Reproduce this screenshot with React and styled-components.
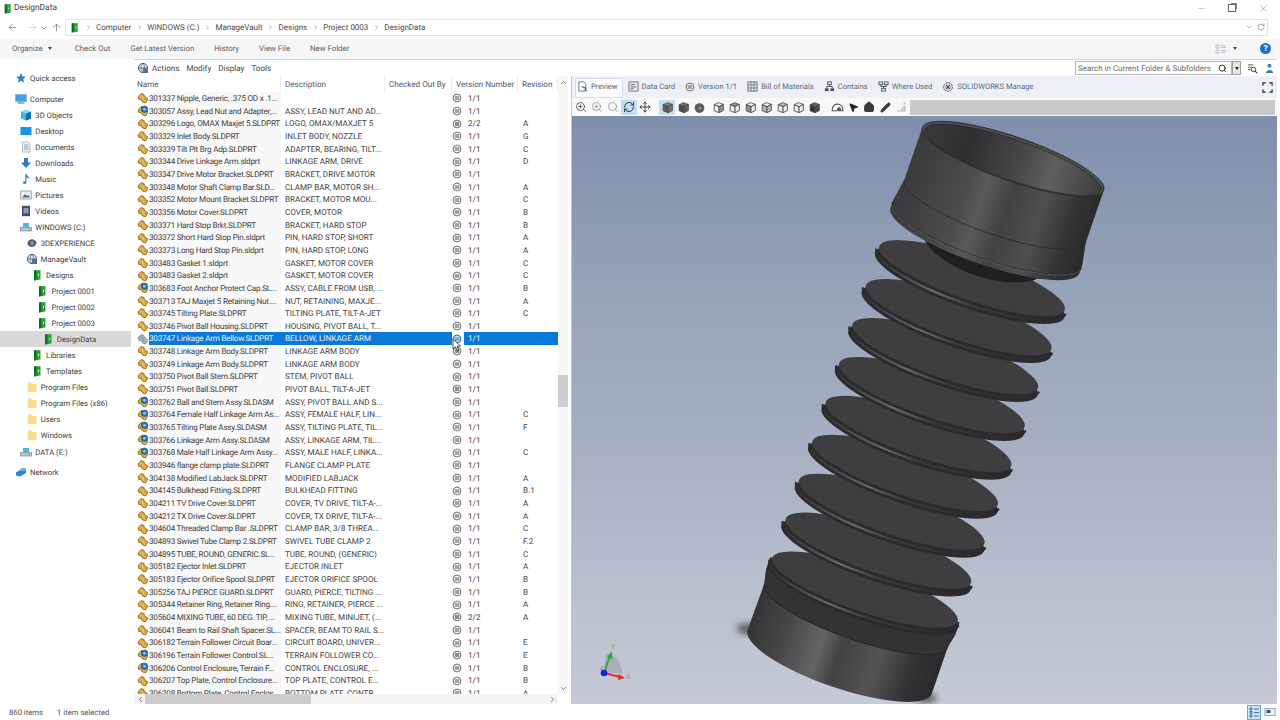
import React from 'react';
import styled, { createGlobalStyle } from 'styled-components';
import { ArrowLeft, ArrowRight, ArrowUp, ChevronDown, ChevronRight, ChevronUp, ChevronLeft, RotateCw, Minus, X, Search, Move, MousePointer2, House, Pencil, RefreshCw, ZoomIn } from 'lucide-react';

const FILES = [
	['301337 Nipple, Generic, .375 OD x .1...', '', '1/1', ''],
	['303057 Assy, Lead Nut and Adapter,...', 'ASSY, LEAD NUT AND AD...', '1/1', '', 'asm'],
	['303296 Logo, OMAX Maxjet 5.SLDPRT', 'LOGO, OMAX/MAXJET 5', '2/2', 'A', 'lock'],
	['303329 Inlet Body.SLDPRT', 'INLET BODY, NOZZLE', '1/1', 'G'],
	['303339 Tilt Plt Brg Adp.SLDPRT', 'ADAPTER, BEARING, TILT...', '1/1', 'C'],
	['303344 Drive Linkage Arm.sldprt', 'LINKAGE ARM, DRIVE', '1/1', 'D'],
	['303347 Drive Motor Bracket.SLDPRT', 'BRACKET, DRIVE MOTOR', '1/1', ''],
	['303348 Motor Shaft Clamp Bar.SLD...', 'CLAMP BAR, MOTOR SH...', '1/1', 'A'],
	['303352 Motor Mount Bracket.SLDPRT', 'BRACKET, MOTOR MOU...', '1/1', 'C'],
	['303356 Motor Cover.SLDPRT', 'COVER, MOTOR', '1/1', 'B'],
	['303371 Hard Stop Brkt.SLDPRT', 'BRACKET, HARD STOP', '1/1', 'B'],
	['303372 Short Hard Stop Pin.sldprt', 'PIN, HARD STOP, SHORT', '1/1', 'A'],
	['303373 Long Hard Stop Pin.sldprt', 'PIN, HARD STOP, LONG', '1/1', 'A'],
	['303483 Gasket 1.sldprt', 'GASKET, MOTOR COVER', '1/1', 'C'],
	['303483 Gasket 2.sldprt', 'GASKET, MOTOR COVER', '1/1', 'C'],
	['303683 Foot Anchor Protect Cap.SL...', 'ASSY, CABLE FROM USB, ...', '1/1', 'B', 'asm'],
	['303713 TAJ Maxjet 5 Retaining Nut....', 'NUT, RETAINING, MAXJE...', '1/1', 'A'],
	['303745 Tilting Plate.SLDPRT', 'TILTING PLATE, TILT-A-JET', '1/1', 'C'],
	['303746 Pivot Ball Housing.SLDPRT', 'HOUSING, PIVOT BALL, T...', '1/1', ''],
	['303747 Linkage Arm Bellow.SLDPRT', 'BELLOW, LINKAGE ARM', '1/1', '', 'sel'],
	['303748 Linkage Arm Body.SLDPRT', 'LINKAGE ARM BODY', '1/1', '', 'lock'],
	['303749 Linkage Arm Body.SLDPRT', 'LINKAGE ARM BODY', '1/1', ''],
	['303750 Pivot Ball Stem.SLDPRT', 'STEM, PIVOT BALL', '1/1', ''],
	['303751 Pivot Ball.SLDPRT', 'PIVOT BALL, TILT-A-JET', '1/1', '', 'lock'],
	['303762 Ball and Stem Assy.SLDASM', 'ASSY, PIVOT BALL AND S...', '1/1', '', 'asm'],
	['303764 Female Half Linkage Arm As...', 'ASSY, FEMALE HALF, LIN...', '1/1', 'C', 'asm'],
	['303765 Tilting Plate Assy.SLDASM', 'ASSY, TILTING PLATE, TIL...', '1/1', 'F', 'asm'],
	['303766 Linkage Arm Assy.SLDASM', 'ASSY, LINKAGE ARM, TIL...', '1/1', '', 'asm'],
	['303768 Male Half Linkage Arm Assy...', 'ASSY, MALE HALF, LINKA...', '1/1', 'C', 'asm'],
	['303946 flange clamp plate.SLDPRT', 'FLANGE CLAMP PLATE', '1/1', ''],
	['304138 Modified LabJack.SLDPRT', 'MODIFIED LABJACK', '1/1', 'A'],
	['304145 Bulkhead Fitting.SLDPRT', 'BULKHEAD FITTING', '1/1', 'B.1'],
	['304211 TV Drive Cover.SLDPRT', 'COVER, TV DRIVE, TILT-A-...', '1/1', 'A'],
	['304212 TX Drive Cover.SLDPRT', 'COVER, TX DRIVE, TILT-A-...', '1/1', 'A'],
	['304604 Threaded Clamp Bar .SLDPRT', 'CLAMP BAR, 3/8 THREA...', '1/1', 'C'],
	['304893 Swivel Tube Clamp 2.SLDPRT', 'SWIVEL TUBE CLAMP 2', '1/1', 'F.2'],
	['304895 TUBE, ROUND, GENERIC.SL...', 'TUBE, ROUND, (GENERIC)', '1/1', 'C'],
	['305182 Ejector Inlet.SLDPRT', 'EJECTOR INLET', '1/1', 'A'],
	['305183 Ejector Orifice Spool.SLDPRT', 'EJECTOR ORIFICE SPOOL', '1/1', 'B'],
	['305256 TAJ PIERCE GUARD.SLDPRT', 'GUARD, PIERCE, TILTING ...', '1/1', 'B'],
	['305344 Retainer Ring, Retainer Ring....', 'RING, RETAINER, PIERCE ...', '1/1', 'A'],
	['305604 MIXING TUBE, 60 DEG. TIP, ...', 'MIXING TUBE, MINIJET, (...', '2/2', 'A', 'lock'],
	['306041 Beam to Rail Shaft Spacer.SL...', 'SPACER, BEAM TO RAIL S...', '1/1', ''],
	['306182 Terrain Follower Circuit Boar...', 'CIRCUIT BOARD, UNIVER...', '1/1', 'E'],
	['306196 Terrain Follower Control.SL...', 'TERRAIN FOLLOWER CO...', '1/1', 'E', 'asmlock'],
	['306206 Control Enclosure, Terrain F...', 'CONTROL ENCLOSURE, ...', '1/1', 'B', 'asm'],
	['306207 Top Plate, Control Enclosure...', 'TOP PLATE, CONTROL E...', '1/1', 'B'],
	['306208 Bottom Plate, Control Enclos...', 'BOTTOM PLATE, CONTR...', '1/1', 'A'],
];

const TREE = [
	{ label: 'Quick access', icon: 'star', depth: 0, after: 5 },
	{ label: 'Computer', icon: 'monitor', depth: 0 },
	{ label: '3D Objects', icon: 'cube', depth: 1 },
	{ label: 'Desktop', icon: 'desktop', depth: 1 },
	{ label: 'Documents', icon: 'doc', depth: 1 },
	{ label: 'Downloads', icon: 'download', depth: 1 },
	{ label: 'Music', icon: 'music', depth: 1 },
	{ label: 'Pictures', icon: 'picture', depth: 1 },
	{ label: 'Videos', icon: 'video', depth: 1 },
	{ label: 'WINDOWS (C:)', icon: 'drive', depth: 1 },
	{ label: '3DEXPERIENCE', icon: 'gear', depth: 2 },
	{ label: 'ManageVault', icon: 'globe', depth: 2 },
	{ label: 'Designs', icon: 'vault', depth: 3 },
	{ label: 'Project 0001', icon: 'vault', depth: 4 },
	{ label: 'Project 0002', icon: 'vault', depth: 4 },
	{ label: 'Project 0003', icon: 'vault', depth: 4 },
	{ label: 'DesignData', icon: 'vault', depth: 5, active: true },
	{ label: 'Libraries', icon: 'vault', depth: 3 },
	{ label: 'Templates', icon: 'vault', depth: 3 },
	{ label: 'Program Files', icon: 'folder', depth: 2 },
	{ label: 'Program Files (x86)', icon: 'folder', depth: 2 },
	{ label: 'Users', icon: 'folder', depth: 2 },
	{ label: 'Windows', icon: 'folder', depth: 2, after: 1 },
	{ label: 'DATA (E:)', icon: 'drive', depth: 1, after: 4 },
	{ label: 'Network', icon: 'network', depth: 0 },
];

const CRUMBS = ['Computer', 'WINDOWS (C:)', 'ManageVault', 'Designs', 'Project 0003', 'DesignData'];
const COMMANDS = ['Check Out', 'Get Latest Version', 'History', 'View File', 'New Folder'];
const TABS = [
	['Preview', 'page'],
	['Data Card', 'card'],
	['Version 1/1', 'state'],
	['Bill of Materials', 'table'],
	['Contains', 'tree'],
	['Where Used', 'treeUp'],
	['SOLIDWORKS Manage', 'gear'],
];

const GlobalStyle = createGlobalStyle`
	html, body {
		margin: 0;
		padding: 0;
		background: #fff;
	}
	body {
		font-family: Roboto, 'Open Sans', sans-serif;
		font-size: 8.1px;
		color: #3d3d3d;
		text-rendering: geometricPrecision;
	}
`;

const Window = styled.div`
	width: 1280px;
	height: 720px;
	display: flex;
	flex-direction: column;
	overflow: hidden;
	background: #fff;
`;

const TitleBar = styled.div`
	height: 16px;
	flex: none;
	display: flex;
	align-items: center;
	padding-left: 2px;
	gap: 1px;
	font-size: 8.4px;
`;

const WindowButtons = styled.div`
	margin-left: auto;
	display: flex;
	color: #666;
	padding-right: 11px;
	gap: 22px;
	align-items: center;
`;

const RestoreBox = styled.span`
	width: 6px;
	height: 6px;
	border: 1px solid #666;
	box-shadow: 2px -2px 0 -1px #888;
`;

const AddressRow = styled.div`
	height: 23px;
	flex: none;
	display: flex;
	align-items: center;
	padding-left: 7px;
	color: #555;
`;

const NavButton = styled.span`
	width: ${(p) => p.$w}px;
	display: flex;
	color: ${(p) => (p.$dim ? '#c4c4c4' : '#5c5c5c')};
`;

const AddressBox = styled.div`
	flex: 1;
	height: 14px;
	margin-right: 12px;
	border: 1px solid #e3e3e3;
	display: flex;
	align-items: center;
	padding: 0 0 1px 3px;
	box-sizing: content-box;
	font-size: 8px;
	color: #4a4a4a;
`;

const Crumb = styled.span`
	display: flex;
	align-items: center;
	margin: 0 4.5px;
	color: #777;
`;

const CrumbText = styled.span`
	color: #4a4a4a;
`;

const AddressTools = styled.span`
	margin-left: auto;
	display: flex;
	align-items: center;
	gap: 4px;
	padding-right: 2px;
	color: #888;
`;

const CommandBar = styled.div`
	height: 20px;
	flex: none;
	box-sizing: border-box;
	padding: 0 0 1px 12px;
	background: #f5f6f7;
	display: flex;
	align-items: center;
	gap: 20px;
	color: #555f6b;
	font-size: 7.8px;
`;

const Organize = styled.span`
	display: flex;
	align-items: center;
	gap: 5px;
	margin-right: 3px;
`;

const Caret = styled.i`
	width: 0;
	height: 0;
	border-left: 2.5px solid transparent;
	border-right: 2.5px solid transparent;
	border-top: 3px solid ${(p) => p.$color || '#444'};
`;

const CommandRight = styled.div`
	margin-left: auto;
	display: flex;
	align-items: center;
	gap: 6px;
	padding-right: 9px;
`;

const HelpBadge = styled.span`
	width: 11px;
	height: 11px;
	border-radius: 50%;
	background: #1a6fc4;
	color: #fff;
	font-weight: 700;
	font-size: 8.5px;
	display: flex;
	align-items: center;
	justify-content: center;
	margin-left: 17px;
`;

const Main = styled.div`
	flex: 1;
	display: flex;
	min-height: 0;
`;

const Sidebar = styled.nav`
	width: 134px;
	flex: none;
	padding-top: 11px;
	box-sizing: border-box;
	display: flex;
	flex-direction: column;
`;

const TreeRow = styled.div`
	height: 16px;
	flex: none;
	display: flex;
	align-items: center;
	gap: 3px;
	width: 131px;
	box-sizing: border-box;
	padding-left: ${(p) => 15 + p.$depth * 5.35}px;
	margin-bottom: ${(p) => p.$after || 0}px;
	background: ${(p) => (p.$active ? '#d9d9d9' : 'transparent')};
	white-space: nowrap;
	font-size: 7.7px;
`;

const Workspace = styled.div`
	flex: 1;
	display: flex;
	flex-direction: column;
	min-width: 0;
	border-top: 1px solid #d4d4d4;
	margin-right: 3px;
`;

const MenuRow = styled.div`
	height: 16px;
	flex: none;
	display: flex;
	align-items: center;
	padding-left: 3px;
	gap: 7px;
	color: #454545;
`;

const MenuIcon = styled.span`
	display: flex;
	margin-right: -4px;
`;

const SearchBox = styled.div`
	margin-left: auto;
	width: 157px;
	height: 14px;
	box-sizing: border-box;
	border: 1px solid #b4b4b4;
	display: flex;
	align-items: center;
	justify-content: space-between;
	padding: 0 4px 0 2px;
	color: #6d6d6d;
	font-size: 8px;
	white-space: nowrap;
`;

const SearchDrop = styled.span`
	width: 9px;
	height: 14px;
	box-sizing: border-box;
	border: 1px solid #9c9c9c;
	background: #e6e6e6;
	display: flex;
	align-items: center;
	justify-content: center;
	margin-left: -7px;
`;

const MenuTools = styled.span`
	display: flex;
	align-items: center;
	gap: 6px;
	margin-left: -1px;
	padding-right: 2px;
`;

const Split = styled.div`
	flex: 1;
	display: flex;
	min-height: 0;
`;

const ListPane = styled.section`
	width: 424px;
	flex: none;
	display: flex;
	flex-direction: column;
	position: relative;
`;

const Cols = styled.div`
	display: grid;
	grid-template-columns: 147px 104px 67px 66px 40px;
`;

const HeaderRow = styled(Cols)`
	height: 16px;
	flex: none;
	color: #4d5763;
`;

const HeaderCell = styled.div`
	display: flex;
	align-items: center;
	padding-left: ${(p) => (p.$name ? 3 : 4)}px;
	border-right: 1px solid #eceef0;
	white-space: nowrap;
`;

const Rows = styled.div`
	flex: 1;
	min-height: 0;
	overflow: hidden;
`;

const FileRow = styled(Cols)`
	height: 12.66px;
	line-height: 12.66px;
	white-space: nowrap;
`;

const NameCell = styled.div`
	display: flex;
	align-items: center;
	padding-left: 3px;
	min-width: 0;
`;

const NameLabel = styled.span`
	flex: 1;
	min-width: 0;
	overflow: hidden;
	letter-spacing: -0.22px;
	background: ${(p) => (p.$sel ? '#0a78d7' : '#f8f8f8')};
	color: ${(p) => (p.$sel ? '#e8f3fd' : 'inherit')};
`;

const TextCell = styled.div`
	overflow: hidden;
	padding-left: ${(p) => p.$pad || 0}px;
	background: ${(p) => (p.$sel ? '#0a78d7' : 'transparent')};
	color: ${(p) => (p.$sel ? '#e8f3fd' : 'inherit')};
`;

const VersionCell = styled.div`
	display: flex;
	align-items: center;
`;

const VersionIcon = styled.span`
	width: 12px;
	flex: none;
	display: flex;
	justify-content: flex-start;
`;

const VersionText = styled.span`
	flex: 1;
	align-self: stretch;
	padding-left: 4px;
	background: ${(p) => (p.$sel ? '#0a78d7' : 'transparent')};
	color: ${(p) => (p.$sel ? '#e8f3fd' : 'inherit')};
`;

const HScroll = styled.div`
	height: 10px;
	flex: none;
	background: #f4f4f4;
	display: flex;
	align-items: center;
	color: #555;
`;

const HThumb = styled.span`
	width: 166px;
	height: 100%;
	background: #cdcdcd;
`;

const VScroll = styled.div`
	width: 10px;
	flex: none;
	margin-bottom: 10px;
	background: #f7f7f7;
	display: flex;
	flex-direction: column;
	align-items: center;
	color: #555;
	padding: 2px 0 1px;
	box-sizing: border-box;
`;

const VThumb = styled.span`
	width: 100%;
	height: 32px;
	flex: none;
	background: #cdcdcd;
	margin-top: 288px;
	margin-bottom: auto;
`;

const Preview = styled.section`
	flex: 1;
	margin-left: 3px;
	border-left: 1px solid #c3c8d3;
	display: flex;
	flex-direction: column;
	min-width: 0;
	background: #fff;
`;

const TabBar = styled.div`
	height: 22px;
	flex: none;
	background: #edf0f7;
	display: flex;
	align-items: flex-end;
	padding-left: 3px;
	padding-right: 3px;
`;

const Tab = styled.div`
	height: 20px;
	display: flex;
	align-items: center;
	gap: 3px;
	padding: 0 5px 3px ${(p) => (p.$active ? 2 : 5)}px;
	box-sizing: border-box;
	white-space: nowrap;
	color: #5d6778;
	background: ${(p) => (p.$active ? '#fbfcfe' : 'transparent')};
	box-shadow: ${(p) => (p.$active ? 'inset 0 0 0 1px #d8deea' : 'none')};
	font-size: 7.6px;
`;

const FullScreen = styled.span`
	margin-left: auto;
	align-self: center;
	display: flex;
	color: #333;
	padding-right: 1px;
`;

const ToolBar = styled.div`
	height: 18px;
	flex: none;
	display: flex;
	align-items: center;
	padding-left: 1px;
	background: #f8f8f9;
`;

const ToolGroup = styled.div`
	display: flex;
	margin-right: ${(p) => p.$gap}px;
`;

const ToolCell = styled.span`
	width: 16px;
	height: 15px;
	display: flex;
	align-items: center;
	justify-content: center;
	color: #444;
	background: ${(p) => (p.$on ? '#c5dcf3' : 'transparent')};
`;

const ToolFill = styled.div`
	flex: 1;
	height: 15px;
	background: #c9c9c9;
	margin-right: 2px;
`;

const Viewport = styled.div`
	flex: 1;
	position: relative;
	min-height: 0;
	background: linear-gradient(180deg, #7e8fac 0%, #97a3b9 30%, #a6afc1 55%, #b8bfcd 80%, #c5cad6 100%);
`;

const ViewportArt = styled.svg`
	position: absolute;
	left: 0;
	top: 0;
	width: 100%;
	height: 100%;
`;

const Cursor = styled.svg`
	position: absolute;
	left: 318px;
	top: 262px;
`;

const StatusBar = styled.footer`
	height: 16px;
	flex: none;
	display: flex;
	align-items: center;
	padding-left: 9px;
	gap: 14px;
	color: #555;
	font-size: 7.7px;
`;

const ViewSwitch = styled.span`
	margin-left: auto;
	display: flex;
	align-items: center;
	padding-right: 3px;
	gap: 2px;
`;

const ViewButton = styled.span`
	width: 14px;
	height: 15px;
	display: flex;
	align-items: center;
	justify-content: center;
	background: ${(p) => (p.$on ? '#cbe6f8' : 'transparent')};
	box-shadow: ${(p) => (p.$on ? 'inset 0 0 0 1px #63a9d8' : 'none')};
`;

const Ico = ({ s = 12, children }) => (
	<svg width={s} height={s} viewBox='0 0 12 12' style={{ flex: 'none' }}>
		{children}
	</svg>
);

const VaultGlyph = ({ s }) => (
	<Ico s={s}>
		<path d='M3 1.5 L9.5 1 V10.5 L3 11.5 Z' fill='#2ea43a' />
		<path d='M3 1.5 L5.5 1 V11 L3 11.5 Z' fill='#0f6d2a' />
		<rect x='7' y='5' width='1' height='2' fill='#c9efc8' />
	</Ico>
);

const TreeIcon = ({ kind }) => {
	switch (kind) {
		case 'star':
			return <Ico><path d='M6 1 L7.5 4.4 L11 4.7 L8.3 7 L9.2 10.7 L6 8.7 L2.8 10.7 L3.7 7 L1 4.7 L4.5 4.4 Z' fill='#2f7fc9' /></Ico>;
		case 'monitor':
			return <Ico><rect x='0.5' y='1.5' width='11' height='7' fill='#3ba2ea' stroke='#8fa9bd' strokeWidth='.7' /><rect x='2.5' y='9' width='7' height='1.8' fill='#9aa6ae' /></Ico>;
		case 'cube':
			return <Ico><path d='M6 .8 L11 2.6 V9.6 L6 11.4 L1 9.6 V2.6 Z' fill='#41b4e8' /><path d='M6 4.4 L11 2.6 V9.6 L6 11.4 Z' fill='#126fb3' /><path d='M6 .8 L11 2.6 L6 4.4 L1 2.6 Z' fill='#8fdcf7' /></Ico>;
		case 'desktop':
			return <Ico><rect x='.5' y='2' width='11' height='8' fill='#1f95ea' /></Ico>;
		case 'doc':
			return <Ico><path d='M2.5 1 H8 L10 3 V11 H2.5 Z' fill='#eef1f5' stroke='#9aa4b0' strokeWidth='.7' /><path d='M4 4 H8.5 M4 6 H8.5 M4 8 H8.5' stroke='#7e8fa3' strokeWidth='.8' /></Ico>;
		case 'download':
			return <Ico><path d='M4 1 H8 V5.5 H11 L6 11 L1 5.5 H4 Z' fill='#2c79cd' /></Ico>;
		case 'music':
			return <Ico><path d='M5.2 1 H6.4 C6.8 3 9.5 3.5 9.5 6 C8.8 5 7.4 4.4 6.4 4.4 V9.4 C6.4 10.8 4.8 11.4 3.7 11 C2.6 10.4 3 8.8 4 8.3 C4.4 8.1 4.9 8.1 5.2 8.2 Z' fill='#2f8fd8' /></Ico>;
		case 'picture':
			return <Ico><rect x='.7' y='2' width='10.6' height='8' fill='#eef2f6' stroke='#87939f' strokeWidth='.8' /><path d='M2 8.5 L5 5 L7 7 L8.5 6 L10 8.5 Z' fill='#456f92' /></Ico>;
		case 'video':
			return <Ico><rect x='2' y='.8' width='8' height='10.4' fill='#4a4f5c' /><rect x='3.5' y='3' width='5' height='5.5' fill='#7f9ac4' /></Ico>;
		case 'drive':
			return <Ico><rect x='.5' y='6.5' width='11' height='3.5' fill='#b9c2ca' stroke='#70808d' strokeWidth='.6' /><rect x='3' y='2' width='6' height='4' fill='#5aaee6' /><rect x='8.5' y='7.5' width='1.5' height='1' fill='#3b5' /></Ico>;
		case 'gear':
			return <Ico><path d='M6 2 L10 4 L10.5 6.5 L8.5 9.5 L4 10 L1.5 7.5 L2 4 Z' fill='#53606e' /><circle cx='6' cy='6' r='1.8' fill='#8a98a6' /></Ico>;
		case 'globe':
			return <Ico><circle cx='6' cy='6' r='4.6' fill='#dfe8f2' stroke='#3e5875' strokeWidth='1' /><path d='M1.5 6 H10.5 M6 1.5 C3.5 4 3.5 8 6 10.5 C8.5 8 8.5 4 6 1.5' fill='none' stroke='#3e5875' strokeWidth='.7' /><rect x='6' y='6' width='5' height='5' fill='#5c6f85' /></Ico>;
		case 'vault':
			return <VaultGlyph />;
		case 'folder':
			return <Ico><path d='M1.8 1.5 H5 L6 3 H10.5 V10.8 H1.8 Z' fill='#fbdb85' /></Ico>;
		case 'network':
			return <Ico><path d='M1 6.5 L7 3 L11 4 L11 7 L5 10.5 L1 9.5 Z' fill='#2788d6' /><path d='M6 2 H11 V5 H6 Z' fill='#58b5ee' /></Ico>;
		default:
			return <Ico />;
	}
};

const PartIcon = ({ asm, muted }) => (
	<Ico>
		<g opacity={muted ? 0.8 : 1}>
			<path d='M1 5 L4 1.5 L7 2.5 L7.5 4.5 L11 7 L8.5 11 L5.5 10 L4 7.5 L1.8 7.5 Z' fill={muted ? '#98a0a0' : '#d9a23c'} stroke={muted ? '#4f6d79' : '#8a641c'} strokeWidth='.8' />
			<path d='M3 3.5 L7 6.5 M5.5 6.5 L8 9.5' stroke={muted ? '#5d7480' : '#f5d37a'} strokeWidth='.8' />
			{asm && <circle cx='7.5' cy='4.2' r='3.2' fill='#2677b8' stroke='#17456e' strokeWidth='.6' />}
			{asm && <circle cx='7.5' cy='4.2' r='1.3' fill='#9ccbe9' />}
		</g>
	</Ico>
);

const StateIcon = ({ lock, sel }) => (
	<Ico s={10}>
		<circle cx='6' cy='6' r='4.7' fill={sel ? '#cfe5f8' : '#fafafa'} stroke={sel ? '#1b6fb5' : '#6e6e6e'} strokeWidth='1.2' />
		{lock ? <rect x='3.3' y='3.4' width='5.4' height='5.2' fill='#8d8d8d' /> : <path d='M3.2 4.8 H8.8 M3.2 7.2 H8.8' stroke={sel ? '#1b6fb5' : '#4d4d4d'} strokeWidth='1.3' />}
	</Ico>
);

const TabIcon = ({ kind }) => {
	switch (kind) {
		case 'page':
			return <Ico s={11}><path d='M2 1 H7.5 L9.5 3 V11 H2 Z' fill='#fff' stroke='#68727f' /><path d='M5 6 L10 8 L8.5 9 L11 11' fill='none' stroke='#2d3a4a' strokeWidth='1' /></Ico>;
		case 'card':
			return <Ico s={11}><rect x='1' y='1' width='10' height='10' fill='#e3e6ec' stroke='#6b7583' /><path d='M3 4 H7 M3 6.5 H9 M3 8.5 H6' stroke='#5a6472' /></Ico>;
		case 'state':
			return <StateIcon />;
		case 'table':
			return <Ico s={11}><rect x='1' y='1' width='10' height='10' fill='#dfe4ef' stroke='#5f6e83' /><path d='M1 4.3 H11 M1 7.6 H11 M4.3 1 V11 M7.6 1 V11' stroke='#5f6e83' strokeWidth='.8' /></Ico>;
		case 'tree':
			return <Ico s={11}><rect x='4' y='1' width='4' height='3' fill='none' stroke='#45505e' /><rect x='1' y='8' width='4' height='3' fill='#45505e' /><rect x='7' y='8' width='4' height='3' fill='#45505e' /><path d='M6 4 V6 M3 8 V6 H9 V8' fill='none' stroke='#45505e' /></Ico>;
		case 'treeUp':
			return <Ico s={11}><rect x='1' y='1' width='4' height='3' fill='none' stroke='#45505e' /><rect x='7' y='1' width='4' height='3' fill='none' stroke='#45505e' /><rect x='4' y='8' width='4' height='3' fill='none' stroke='#45505e' /><path d='M3 4 V6 H9 V4 M6 6 V8' fill='none' stroke='#45505e' /></Ico>;
		default:
			return <Ico s={12}><circle cx='6' cy='6' r='4.4' fill='#cfd4dc' stroke='#48505c' strokeWidth='1' strokeDasharray='2 1' /><path d='M4 4 L8 8 M8 4 L4 8' stroke='#48505c' /><circle cx='6' cy='6' r='1.5' fill='#48505c' /></Ico>;
	}
};

// isometric box; the fills say which faces are shaded in this view
const ViewCube = ({ top, left, right }) => (
	<Ico s={13}>
		<path d='M6 1.5 L10.5 3.2 L6.5 5.2 L2 3.5 Z' fill={top || '#eee'} stroke='#4a4a4a' strokeWidth='.8' />
		<path d='M2 3.5 L6.5 5.2 V10.8 L2 9 Z' fill={left || '#eee'} stroke='#4a4a4a' strokeWidth='.8' />
		<path d='M6.5 5.2 L10.5 3.2 V8.8 L6.5 10.8 Z' fill={right || '#eee'} stroke='#4a4a4a' strokeWidth='.8' />
	</Ico>
);

const TOOL_GROUPS = [
	{
		gap: 6,
		items: [
			{ node: <ZoomIn size={12} strokeWidth={1.6} /> },
			{ node: <ZoomIn size={12} strokeWidth={1.2} color='#777' /> },
			{ node: <Search size={12} strokeWidth={1.2} color='#777' /> },
			{ node: <RefreshCw size={12} strokeWidth={2} color='#2b3b55' />, on: true },
			{ node: <Move size={12} strokeWidth={1.7} color='#333' /> },
		],
	},
	{
		gap: 3,
		items: [
			{ node: <ViewCube top='#858585' left='#5e5e5e' right='#737373' />, on: true },
			{ node: <ViewCube top='#707070' left='#484848' right='#5c5c5c' /> },
			{ node: <Ico s={13}><circle cx='6' cy='6.5' r='4.5' fill='#5c5c5c' /><circle cx='6.5' cy='6.5' r='1.5' fill='#8b8b8b' /></Ico> },
		],
	},
	{
		gap: 7,
		items: [
			{ node: <ViewCube right='#8f8f8f' /> },
			{ node: <ViewCube top='#8f8f8f' /> },
			{ node: <ViewCube left='#8f8f8f' /> },
			{ node: <ViewCube left='#b5b5b5' right='#b5b5b5' /> },
			{ node: <ViewCube top='#b5b5b5' /> },
			{ node: <ViewCube /> },
			{ node: <ViewCube top='#666' left='#333' right='#4a4a4a' /> },
		],
	},
	{
		gap: 1,
		items: [
			{ node: <Ico s={13}><path d='M1 9 C1 4 4 2.5 7 3 C10 3.5 11 6 11 9 Z' fill='none' stroke='#555' strokeWidth='1' /><circle cx='7.5' cy='7.5' r='1.8' fill='#555' /></Ico> },
			{ node: <MousePointer2 size={11} fill='#222' color='#222' /> },
			{ node: <House size={12} fill='#3a3a3a' color='#333' strokeWidth={1.6} /> },
			{ node: <Pencil size={11} fill='#3f3f3f' color='#333' /> },
			{ node: <Ico s={12}><path d='M2 10 H10 L10 5 L7 7 L7 10' fill='#ddd' stroke='#a9a9a9' strokeWidth='.8' /><circle cx='9.5' cy='2.5' r='1' fill='#b3b3b3' /></Ico> },
		],
	},
];

const DISC_STEP = 41.1;

const Disc = ({ y }) => (
	<g>
		<ellipse cx='2' cy={y - 31} rx='64' ry='27' fill='#232325' />
		<ellipse cx='0' cy={y + 7} rx='100' ry='23' fill='#2b2b2d' />
		<path d={`M -100 ${y + 3} A 100 23 0 0 0 100 ${y + 3}`} fill='none' stroke='url(#rim)' strokeWidth='2.2' />
		<ellipse cx='0' cy={y} rx='98' ry='22' fill='#3e3e40' />
	</g>
);

const Bellows = () => (
	<ViewportArt viewBox='572 116 705 587' preserveAspectRatio='none'>
		<defs>
			<linearGradient id='rim' gradientUnits='userSpaceOnUse' x1='-100' x2='100' y1='0' y2='0'>
				<stop offset='0' stopColor='#2b2b2d' />
				<stop offset='.35' stopColor='#6a6a6c' />
				<stop offset='.55' stopColor='#3a3a3c' />
				<stop offset='1' stopColor='#29292b' />
			</linearGradient>
			<linearGradient id='wall' x1='0' x2='1' y1='0' y2='0'>
				<stop offset='0' stopColor='#333335' />
				<stop offset='.18' stopColor='#454547' />
				<stop offset='.38' stopColor='#646466' />
				<stop offset='.48' stopColor='#434345' />
				<stop offset='.68' stopColor='#535355' />
				<stop offset='.85' stopColor='#333335' />
				<stop offset='1' stopColor='#29292b' />
			</linearGradient>
			<linearGradient id='collar' x1='0' x2='1' y1='0' y2='0'>
				<stop offset='0' stopColor='#39393b' />
				<stop offset='.34' stopColor='#4d4d4f' />
				<stop offset='.42' stopColor='#5a5a5c' />
				<stop offset='.55' stopColor='#424244' />
				<stop offset='.72' stopColor='#4f4f51' />
				<stop offset='.88' stopColor='#333335' />
				<stop offset='1' stopColor='#2a2a2c' />
			</linearGradient>
			<linearGradient id='bore' x1='0' x2='1' y1='0' y2='0'>
				<stop offset='0' stopColor='#3a3a3c' />
				<stop offset='.25' stopColor='#2f2f31' />
				<stop offset='.55' stopColor='#48484a' />
				<stop offset='.72' stopColor='#5f5f61' />
				<stop offset='1' stopColor='#3d3d3f' />
			</linearGradient>
			<filter id='soft' x='-50%' y='-50%' width='200%' height='200%'>
				<feGaussianBlur stdDeviation='3.5' />
			</filter>
		</defs>

		<ellipse cx='746' cy='628' rx='9' ry='5' fill='#2e3038' opacity='.75' filter='url(#soft)' />
		<ellipse cx='926' cy='697' rx='11' ry='4' fill='#2a2b30' opacity='.85' filter='url(#soft)' />

		<g transform='translate(972 278) rotate(19)'>
			<path d='M -98 405 L -97 356 L -100 342 L -100 329 L 100 329 L 100 342 L 97 356 L 97 405 A 97.5 26 0 0 1 -98 405 Z' fill='url(#wall)' />
			<path d='M -100 329 L -100 342 L -97 356 A 97 24 0 0 0 97 356 L 100 342 L 100 329 Z' fill='#333335' />
			<path d='M -97 356 A 97 24 0 0 0 97 356' fill='none' stroke='#242426' strokeWidth='.8' />
			{[8, 7, 6, 5, 4, 3, 2, 1, 0].map((k) => (
				<Disc key={k} y={k * DISC_STEP} />
			))}
			<ellipse cx='2' cy='-31' rx='64' ry='27' fill='#1f1f21' />
			<path d='M -96 -126 L -96 -71 L -100 -48 L -100 -40 A 100 24 0 0 0 100 -40 L 100 -48 L 96 -71 L 96 -126 Z' fill='url(#collar)' />
			<path d='M -96 -71 A 96 23 0 0 0 96 -71' fill='none' stroke='#2b2b2d' strokeWidth='.8' />
			<path d='M -100 -46 A 100 24 0 0 0 100 -46' fill='none' stroke='#1f1f21' strokeWidth='.8' />
			<path d='M -99.5 -43 A 100 24 0 0 0 99.5 -43' fill='none' stroke='#5a5a5c' strokeWidth='.8' />
			<ellipse cx='0' cy='-126' rx='96' ry='22' fill='#505052' stroke='#262628' strokeWidth='.8' />
			<ellipse cx='0' cy='-125' rx='93' ry='20' fill='url(#bore)' stroke='#232325' strokeWidth='.6' />
		</g>

		<path d='M604 672 L606 652 C616 654 622 662 622 672 Z' fill='#9a9ea5' opacity='.6' />
		<path d='M604 672 L610 655' stroke='#2fa84a' strokeWidth='2' />
		<path d='M612 650 L607 656 L612.5 658 Z' fill='#2fa84a' />
		<path d='M604 672 L620 676' stroke='#d5342a' strokeWidth='2' />
		<path d='M625 677 L618.5 673 L618 679 Z' fill='#d5342a' />
		<circle cx='604' cy='672' r='3.3' fill='#1424d6' />
		<text x='611' y='648' fontSize='7' fill='#57b75f' fontFamily='Liberation Sans, sans-serif'>Y</text>
		<text x='626' y='678' fontSize='7' fill='#d5726a' fontFamily='Liberation Sans, sans-serif'>X</text>
		<text x='600' y='669' fontSize='6' fill='#5b6ad2' fontFamily='Liberation Sans, sans-serif'>Z</text>
	</ViewportArt>
);

const App = () => (
	<Window>
		<GlobalStyle />
		<TitleBar>
			<VaultGlyph s={11} />
			<span>DesignData</span>
			<WindowButtons>
				<Minus size={9} strokeWidth={1} />
				<RestoreBox />
				<X size={11} strokeWidth={1} />
			</WindowButtons>
		</TitleBar>

		<AddressRow>
			<NavButton $w={20}><ArrowLeft size={11} strokeWidth={1.4} /></NavButton>
			<NavButton $w={13} $dim><ArrowRight size={11} strokeWidth={1.4} /></NavButton>
			<NavButton $w={11}><ChevronDown size={8} /></NavButton>
			<NavButton $w={14}><ArrowUp size={11} strokeWidth={1.4} /></NavButton>
			<AddressBox>
				<VaultGlyph s={11} />
				<Crumb><ChevronRight size={7} /></Crumb>
				{CRUMBS.map((c, i) => (
					<React.Fragment key={c}>
						<CrumbText>{c}</CrumbText>
						{i < CRUMBS.length - 1 && <Crumb><ChevronRight size={7} /></Crumb>}
					</React.Fragment>
				))}
				<AddressTools>
					<ChevronDown size={8} />
					<RotateCw size={8} />
				</AddressTools>
			</AddressBox>
		</AddressRow>

		<CommandBar>
			<Organize>Organize <Caret /></Organize>
			{COMMANDS.map((c) => (
				<span key={c}>{c}</span>
			))}
			<CommandRight>
				<Ico s={12}>
					<path d='M1 2 H4 V5 H1 Z M1 7 H4 V10 H1 Z M6 2.5 H11 M6 4.5 H11 M6 7.5 H11 M6 9.5 H11' fill='none' stroke='#a9b2bc' strokeWidth='.8' />
				</Ico>
				<Caret />
				<HelpBadge>?</HelpBadge>
			</CommandRight>
		</CommandBar>

		<Main>
			<Sidebar>
				{TREE.map((t) => (
					<TreeRow key={t.label} $depth={t.depth} $active={t.active} $after={t.after}>
						<TreeIcon kind={t.icon} />
						<span>{t.label}</span>
					</TreeRow>
				))}
			</Sidebar>

			<Workspace>
				<MenuRow>
					<MenuIcon><TreeIcon kind='globe' /></MenuIcon>
					<span>Actions</span>
					<span>Modify</span>
					<span>Display</span>
					<span>Tools</span>
					<SearchBox>
						<span>Search in Current Folder &amp; Subfolders</span>
						<Search size={9} strokeWidth={2.4} color='#222' />
					</SearchBox>
					<SearchDrop><Caret $color='#222' /></SearchDrop>
					<MenuTools>
						<Ico s={11}>
							<path d='M1 2 H7 M1 4.5 H5 M1 7 H4' stroke='#555' />
							<circle cx='7' cy='7' r='2.4' fill='none' stroke='#333' />
							<path d='M8.8 8.8 L11 11' stroke='#333' strokeWidth='1.2' />
						</Ico>
						<Ico s={11}>
							<circle cx='6' cy='3' r='2.2' fill='#3f7fb5' />
							<path d='M2 11 C2 6.5 10 6.5 10 11 Z' fill='#3f7fb5' />
						</Ico>
					</MenuTools>
				</MenuRow>

				<Split>
					<ListPane>
						<HeaderRow>
							<HeaderCell $name>Name</HeaderCell>
							<HeaderCell>Description</HeaderCell>
							<HeaderCell>Checked Out By</HeaderCell>
							<HeaderCell>Version Number</HeaderCell>
							<HeaderCell>Revision</HeaderCell>
						</HeaderRow>
						<Rows>
							{FILES.map(([name, desc, version, rev, flag], i) => {
								const sel = flag === 'sel';
								return (
									<FileRow key={i}>
										<NameCell>
											<PartIcon asm={flag === 'asm' || flag === 'asmlock'} muted={sel} />
											<NameLabel $sel={sel}>{name}</NameLabel>
										</NameCell>
										<TextCell $sel={sel} $pad={4}>{desc}</TextCell>
										<TextCell $sel={sel} />
										<VersionCell>
											<VersionIcon>
												<StateIcon lock={flag === 'lock' || flag === 'asmlock'} sel={sel} />
											</VersionIcon>
											<VersionText $sel={sel}>{version}</VersionText>
										</VersionCell>
										<TextCell $sel={sel} $pad={5}>{rev}</TextCell>
									</FileRow>
								);
							})}
						</Rows>
						<HScroll>
							<ChevronLeft size={9} style={{ marginLeft: 2 }} />
							<HThumb />
							<ChevronRight size={9} style={{ marginLeft: 'auto', marginRight: 1 }} />
						</HScroll>
						<Cursor width='10' height='14' viewBox='0 0 10 14'>
							<path d='M1 1 V11 L3.5 8.8 L5.5 13 L7 12.3 L5.2 8.2 L8.5 8 Z' fill='#fff' stroke='#222' strokeWidth='.8' />
						</Cursor>
					</ListPane>

					<VScroll>
						<ChevronUp size={9} />
						<VThumb />
						<ChevronDown size={9} />
					</VScroll>

					<Preview>
						<TabBar>
							{TABS.map(([label, kind], i) => (
								<Tab key={label} $active={i === 0}>
									<TabIcon kind={kind} />
									<span>{label}</span>
								</Tab>
							))}
							<FullScreen>
								<Ico s={11}>
									<path d='M1 4 V1 H4 M8 1 H11 V4 M11 8 V11 H8 M4 11 H1 V8' fill='none' stroke='#222' strokeWidth='1.2' />
								</Ico>
							</FullScreen>
						</TabBar>
						<ToolBar>
							{TOOL_GROUPS.map((group, g) => (
								<ToolGroup key={g} $gap={group.gap}>
									{group.items.map((item, i) => (
										<ToolCell key={i} $on={item.on}>{item.node}</ToolCell>
									))}
								</ToolGroup>
							))}
							<ToolFill />
						</ToolBar>
						<Viewport>
							<Bellows />
						</Viewport>
					</Preview>
				</Split>
			</Workspace>
		</Main>

		<StatusBar>
			<span>860 items</span>
			<span>1 item selected</span>
			<ViewSwitch>
				<ViewButton $on>
					<Ico s={12}>
						<path d='M2 2 H4 V4 H2 Z M2 5.5 H4 V7.5 H2 Z M2 9 H4 V11 H2 Z M6 3 H11 M6 6.5 H11 M6 10 H11' fill='none' stroke='#41617c' strokeWidth='.9' />
					</Ico>
				</ViewButton>
				<ViewButton>
					<Ico s={12}>
						<rect x='1' y='2.5' width='10' height='7' fill='#eef3f6' stroke='#7d8a94' strokeWidth='.8' />
						<rect x='2.5' y='4' width='4' height='3' fill='#2f5d72' />
					</Ico>
				</ViewButton>
			</ViewSwitch>
		</StatusBar>
	</Window>
);

export default App;
